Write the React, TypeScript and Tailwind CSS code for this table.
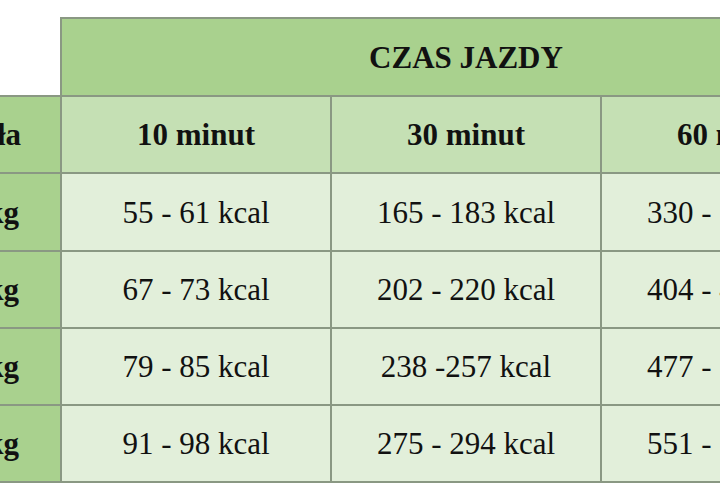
export default function App() {
  const rows = [
    ["50 kg", "55 - 61 kcal", "165 - 183 kcal", "330 - 366 kcal"],
    ["60 kg", "67 - 73 kcal", "202 - 220 kcal", "404 - 440 kcal"],
    ["70 kg", "79 - 85 kcal", "238 -257 kcal", "477 - 514 kcal"],
    ["80 kg", "91 - 98 kcal", "275 - 294 kcal", "551 - 588 kcal"],
  ];
  return (
    <div className="w-[720px] h-[500px] overflow-hidden bg-white" style={{ fontFamily: '"Liberation Serif", "Times New Roman", serif' }}>
      <div className="mt-[17px] ml-[-142px] w-max grid grid-cols-[200px_268px_268px_268px] grid-rows-[76px_75px_76px_75px_75px_75px] gap-[2px] p-[2px] bg-[#8a9883] text-[31px] leading-none text-[#111]">
        <div className="bg-white -mt-[2px] -ml-[2px]"></div>
        <div className="col-span-3 bg-[#a9d18e] flex items-center justify-center font-bold">CZAS JAZDY</div>
        <div className="bg-[#a9d18e] flex items-center justify-end pr-[39px] font-bold">Masa ciała</div>
        <div className="bg-[#c5e0b4] flex items-center justify-center font-bold">10 minut</div>
        <div className="bg-[#c5e0b4] flex items-center justify-center font-bold">30 minut</div>
        <div className="bg-[#c5e0b4] flex items-center justify-center font-bold">60 minut</div>
        {rows.map((r) => (
          <>
            <div key={r[0]} className="bg-[#a9d18e] flex items-center justify-end pr-[41px] font-bold">{r[0]}</div>
            <div key={r[1]} className="bg-[#e2efda] flex items-center justify-center">{r[1]}</div>
            <div key={r[2]} className="bg-[#e2efda] flex items-center justify-center">{r[2]}</div>
            <div key={r[3]} className="bg-[#e2efda] flex items-center justify-center">{r[3]}</div>
          </>
        ))}
      </div>
    </div>
  );
}
